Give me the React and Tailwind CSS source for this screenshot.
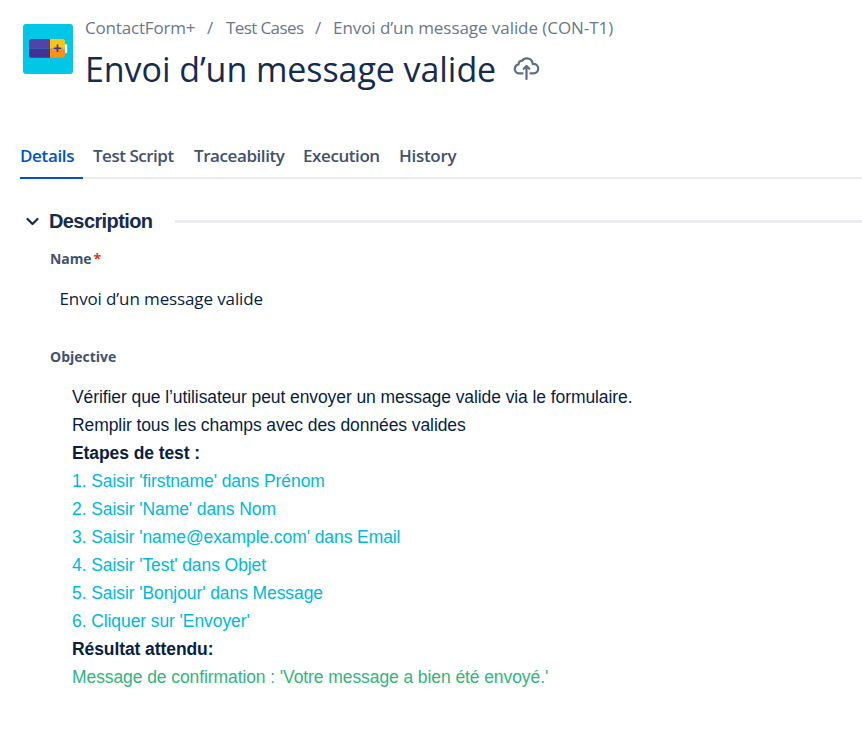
const tabs = [
  { label: "Details", box: "w-[73px]", text: "tracking-[-0.35px]", active: true },
  { label: "Test Script", box: "w-[101px]", text: "tracking-[-0.48px]" },
  { label: "Traceability", box: "w-[109px]", text: "tracking-[-0.42px]" },
  { label: "Execution", box: "w-24", text: "tracking-[-0.42px]" },
  { label: "History", box: "w-20", text: "tracking-[-0.3px]" },
];

const steps = [
  "1. Saisir 'firstname' dans Prénom",
  "2. Saisir 'Name' dans Nom",
  "3. Saisir 'name@example.com' dans Email",
  "4. Saisir 'Test' dans Objet",
  "5. Saisir 'Bonjour' dans Message",
  "6. Cliquer sur 'Envoyer'",
];

function ProjectAvatar() {
  return (
    <svg className="h-[50px] w-[50px] shrink-0" viewBox="0 0 50 50">
      <rect width="50" height="50" rx="3" fill="#00c7e6" />
      <rect x="40" y="20.200" width="4.200" height="9" rx="1" fill="#fff" />
      <path d="M8.500 15H27v9.500H6V17.500a2.500 2.500 0 0 1 2.500-2.500z" fill="#5243aa" />
      <path d="M6 24.500h21v9.200H8.500A2.500 2.500 0 0 1 6 31.200z" fill="#403294" />
      <path d="M27 15h12.500a2.500 2.500 0 0 1 2.500 2.500v7H27z" fill="#ffc21a" />
      <path d="M27 24.500h15v6.700a2.500 2.500 0 0 1-2.500 2.500H27z" fill="#f79215" />
      <path d="M34.500 20.500v7.500M30.900 24.250h7.200" stroke="#403294" strokeWidth="1.700" fill="none" />
    </svg>
  );
}

function CloudUpload() {
  return (
    <svg className="ml-[17px] mt-[17px] h-6 w-[27px] shrink-0" viewBox="0 0 27 24" fill="none" stroke="#5e6c84" strokeWidth="2.200" strokeLinecap="round" strokeLinejoin="round">
      <path d="M9.500 16.400H6.700C3.800 16.400 1.800 14.400 1.800 11.900C1.800 9.400 3.300 7.900 5.500 7.400C5.500 4.900 7.200 3.400 9.300 3.600C10.400 1.800 12 1.300 13.700 1.300C17.100 1.300 19.500 3.600 19.700 6.900C23 6.600 25.200 8.700 25.200 11.600C25.200 14.400 23.300 16.400 20.500 16.400H17.500" />
      <path d="M13.500 22V10M10.700 11.800L13.500 9L16.300 11.800" />
    </svg>
  );
}

export default function App() {
  return (
    <div className="h-[735px] w-full overflow-hidden bg-white font-['Open_Sans','Noto_Sans',sans-serif] text-[#172b4d]">
      <header className="flex h-[138px] pl-[23px] pt-4">
        <div className="pt-2">
          <ProjectAvatar />
        </div>
        <div className="pl-3">
          <nav className="flex h-6 items-center whitespace-nowrap text-[17px] leading-6 text-[#6b778c]">
            <span className="w-[122px] tracking-[-0.18px]">ContactForm+</span>
            <span className="w-[19px]">/</span>
            <span className="w-[89px] tracking-[-0.6px]">Test Cases</span>
            <span className="w-[18px]">/</span>
            <span className="tracking-[-0.06px]">Envoi d’un message valide (CON-T1)</span>
          </nav>
          <div className="flex h-[60px] items-start">
            <h1 className="whitespace-nowrap text-[34px] font-normal leading-[58px] tracking-[-0.07px]">Envoi d’un message valide</h1>
            <CloudUpload />
          </div>
        </div>
      </header>

      <div className="ml-5 flex h-[41px] border-b-2 border-[#ebecf0]">
        {tabs.map((t) => (
          <div key={t.label} className={`${t.box} h-[41px] shrink-0`}>
            <div className={`h-[41px] whitespace-nowrap text-[17px] font-semibold leading-9 ${t.text} ${t.active ? "w-[63px] border-b-2 border-[#0052cc] text-[#0052cc]" : "text-[#42526e]"}`}>
              {t.label}
            </div>
          </div>
        ))}
      </div>

      <section className="pl-[25px]">
        <div className="mt-7 flex h-7 items-center">
          <svg className="h-4 w-4" viewBox="0 0 16 16" fill="none" stroke="#172b4d" strokeWidth="2.200" strokeLinecap="round" strokeLinejoin="round">
            <path d="M2.500 6l5 5 5-5" />
          </svg>
          <h2 className="ml-2 w-[126px] whitespace-nowrap font-['Liberation_Sans',Arial,sans-serif] text-[20px] font-bold leading-7 tracking-[-0.6px]">Description</h2>
          <div className="h-[3px] flex-1 bg-[#ebecf0]" />
        </div>

        <div className="pl-[25px]">
          <div className="mt-3 flex h-6 gap-[2px] text-sm font-bold leading-6 text-[#42526e]">
            <span className="tracking-[-0.1px]">Name</span>
            <span className="text-[#de350b]">*</span>
          </div>
          <p className="mt-4 pl-[9.5px] text-[17px] leading-6 tracking-[-0.12px] text-[#091e42]">Envoi d’un message valide</p>
          <div className="mt-[34px] text-sm font-bold leading-6 text-[#42526e]">Objective</div>

          <div className="mt-[14px] whitespace-nowrap pl-[22px] font-['Liberation_Sans',Arial,sans-serif] text-[17.5px] leading-7 tracking-[-0.0875px] text-[#091e42]">
            <p>Vérifier que l’utilisateur peut envoyer un message valide via le formulaire.</p>
            <p>Remplir tous les champs avec des données valides</p>
            <p className="font-bold">Etapes de test :</p>
            {steps.map((s) => (
              <p key={s} className="text-[#00b8d9]">{s}</p>
            ))}
            <p className="font-bold">Résultat attendu:</p>
            <p className="text-[#36b37e]">Message de confirmation : 'Votre message a bien été envoyé.'</p>
          </div>
        </div>
      </section>
    </div>
  );
}
